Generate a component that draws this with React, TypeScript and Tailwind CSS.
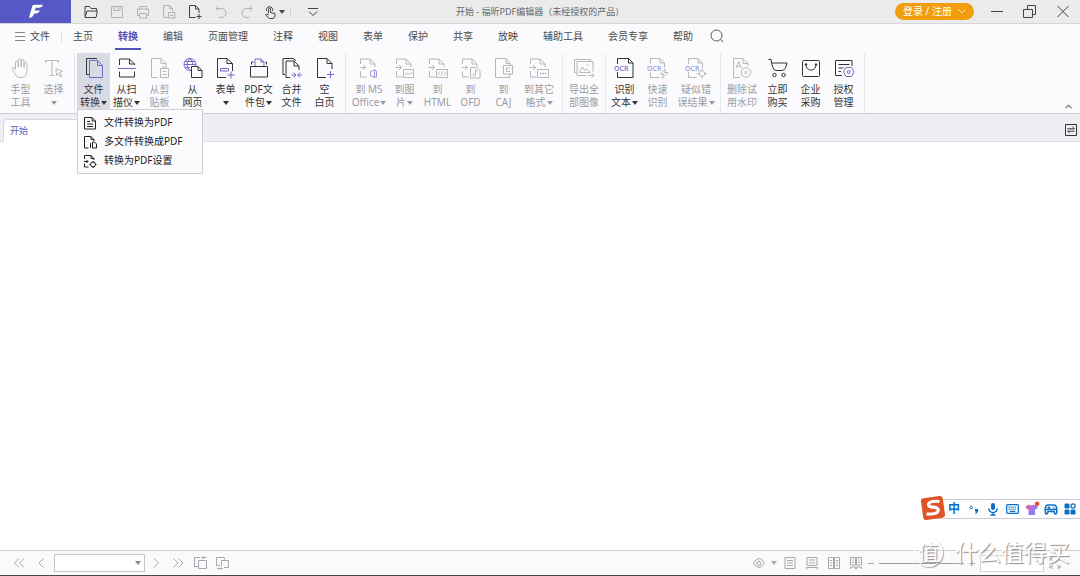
import type { ReactNode } from "react";

const ACCENT = "#6f6bc8";

/* ─── Icon helpers ─── */

function Svg({ size = 22, children }: { size?: number; children: ReactNode }) {
  return (
    <svg
      width={size}
      height={size}
      viewBox={`0 0 ${size} ${size}`}
      fill="none"
      stroke="currentColor"
      strokeWidth="1"
      strokeLinejoin="round"
      className="shrink-0"
      aria-hidden="true"
    >
      {children}
    </svg>
  );
}

function Caret() {
  return (
    <svg width="6" height="4" viewBox="0 0 6 4" className="ml-px inline-block shrink-0 align-middle" aria-hidden="true">
      <path d="M0 0h6L3 4z" fill="currentColor" />
    </svg>
  );
}

/* Page with an arrow going in, shared by all the "export to" tools */
function ExportPage({ children }: { children: ReactNode }) {
  return (
    <Svg>
      <path d="M2.500 7V2h9.500l5 5v3M12 2v5h5M2.500 14v6h6M1.500 10.500h6M5 8l2.500 2.500L5 13" />
      {children}
    </Svg>
  );
}

function OcrText() {
  return (
    <text x="0" y="13.500" fontSize="7" fontWeight="500" fill={ACCENT} stroke="none" fontFamily="Noto Sans, sans-serif">
      OCR
    </text>
  );
}

const ICONS: Record<string, ReactNode> = {
  hand: (
    <Svg>
      <path d="M5.500 12V5.500a1.400 1.400 0 0 1 2.800 0V10M8.300 10V3.500a1.400 1.400 0 0 1 2.900 0V10M11.200 10V4a1.400 1.400 0 0 1 2.900 0v6.500M14.100 10.500V7a1.400 1.400 0 0 1 2.900 0v7c0 4-2 6.500-6 6.500-3 0-4.500-1-6-3.500L2.500 12.500c-1-1.800 1-2.800 2-1.300l1 1.300" />
    </Svg>
  ),
  select: (
    <Svg>
      <path d="M2.500 6V3.500h13V6M9 3.500v15M6.500 18.500h5M13 11.500l6.500 3-3 1 2.500 3.500-1.500 1-2.500-3.500-1.500 2z" />
    </Svg>
  ),
  files: (
    <Svg>
      <path d="M6 17.500H3.500v-16H14" />
      <path d="M6.500 3.500h8l5 5v12h-13zM14.500 3.500v5h5" stroke={ACCENT} />
    </Svg>
  ),
  scanner: (
    <Svg>
      <path d="M3.500 8V2h10l5 5v1M13.500 2v5h5M3.500 14.500v5.500h15v-5.500" />
      <path d="M2 11.500h18" stroke={ACCENT} />
    </Svg>
  ),
  clipboard: (
    <Svg>
      <path d="M8.500 20.500h-6v-19H12l5 5V9M12 1.500v5h5" />
      <path d="M11.500 11.500h8v9h-8zM13.500 11.500v-1.500h4v1.500M13.500 14.500h4M13.500 17.500h4" />
    </Svg>
  ),
  web: (
    <Svg>
      <g stroke={ACCENT}>
        <circle cx="8" cy="7.500" r="6" />
        <path d="M2 7.500h12M8 1.500c-4 4-4 8 0 12M8 1.500c2 2 3 4 3 6M3 4.500h10M3 10.500h5" />
      </g>
      <path d="M9.500 9.500h6.500l4 4v7H9.500zM16 9.500v4h4" fill="#fbfbfd" />
    </Svg>
  ),
  form: (
    <Svg>
      <path d="M11 20.500H2.500v-19H12l5.500 5V14M12 1.500v5h5.500" />
      <path d="M5.500 11.500h8v2.500h-8zM12.500 18h7M16 14.500v7" stroke={ACCENT} />
    </Svg>
  ),
  package: (
    <Svg>
      <path d="M7 9V2h6l3 3v4M13 2v3h3" stroke={ACCENT} />
      <path d="M2.500 9.500h17v10.500h-17zM3.500 7.500V5h2M18.500 7.500V5h-1" />
    </Svg>
  ),
  merge: (
    <Svg>
      <path d="M4 17.500H2V1.500h10l3 2M9 20.500H5V4h8l5 5v4M13 4v5h5" />
      <path d="M10.500 18h4M12.500 15.500L15 18l-2.500 2.500M21 18h-4M19 15.500L16.500 18l2.500 2.500" stroke={ACCENT} />
    </Svg>
  ),
  blank: (
    <Svg>
      <path d="M12 20.500H3.500v-19h9.500l5 5V12M13 1.500v5h5" />
      <path d="M13 17.500h7M16.500 14v7" stroke={ACCENT} />
    </Svg>
  ),
  office: (
    <ExportPage>
      <path d="M12.500 14.500l4-1.500v7.500l-4-1.500zM16.500 13l2 1v6l-2 .500" stroke={ACCENT} />
    </ExportPage>
  ),
  image: (
    <ExportPage>
      <path d="M9.500 12.500h10v8h-10zM11 18.500l2.500-2.500 2 1.500 3-2" />
    </ExportPage>
  ),
  html: (
    <ExportPage>
      <path d="M9.500 12.500h11v8h-11zM12.800 14.500L11 16.500l1.800 1.800M17.200 14.500l1.800 2-1.800 1.800M15.500 14.300l-1 4.200" />
    </ExportPage>
  ),
  ofd: (
    <ExportPage>
      <path d="M10.500 10.500h6l3.500 3v7.500h-9.500zM15.500 12.500v5a1.200 1.200 0 1 1-1.500-1M15.500 12.500l2 1.500" fill="#fbfbfd" />
    </ExportPage>
  ),
  caj: (
    <Svg>
      <path d="M17 8V6.500l-4-5H2.500v19H16.500v-3.500M13 1.500v5h4" />
      <path d="M10.500 8.500h9v8.500h-9zM17 11h-3.500v3.500H17" />
    </Svg>
  ),
  other: (
    <ExportPage>
      <path d="M9.500 12.500h11v8h-11z" />
      <path d="M12 16.500h1.200M14.500 16.500h1.200M17 16.500h1.200" stroke={ACCENT} strokeWidth="1.400" />
    </ExportPage>
  ),
  pictures: (
    <Svg>
      <path d="M3.500 15.500h-2v-13h16v2M13 18.500H4v-14h16v10M6 15.500h11.500M6.500 15l3-5 2.500 3.500 1.500-2 3.500 3.500M14 8h1.500M15 18.500h6M18.500 16l2.500 2.500-2.500 2.500" />
    </Svg>
  ),
  ocr: (
    <Svg>
      <path d="M3.500 7V1.500h11l4.500 4.500v14.500H3.500V15M14.500 1.500V6H19" />
      <OcrText />
    </Svg>
  ),
  ocrFast: (
    <Svg>
      <path d="M3.500 7V1.500h9.500l4.500 4.500v5M13 1.500V6h4.500M3.500 15v5.500h9" />
      <OcrText />
      <path d="M18.500 12l-5 5h3l-1.500 4.500 6-6h-3.500z" fill="#fbfbfd" />
    </Svg>
  ),
  ocrSuspect: (
    <Svg>
      <path d="M3.500 7V1.500h9.500l4.500 4.500v5M13 1.500V6h4.500M3.500 15v5.500h8" />
      <OcrText />
      <circle cx="17" cy="16.500" r="2.800" />
      <path d="M17 12v2M17 19v2.500M12 16.500h2.500M19.500 16.500H22" />
    </Svg>
  ),
  watermark: (
    <Svg>
      <path d="M9 20.500H2.500v-19H12l5 5V9M12 1.500v5h5M5 11.500L7.700 4.500l2.800 7M6 9.500h3.500" />
      <circle cx="15" cy="15.500" r="4.800" />
      <path d="M13.200 13.700l3.600 3.600M16.800 13.700l-3.600 3.600" />
    </Svg>
  ),
  cart: (
    <Svg>
      <path d="M1.500 2.500H4q1.500 11 5 11h6q3.500 0 5-7.500H4.800" />
      <circle cx="7.500" cy="18" r="1.700" />
      <circle cx="16.500" cy="18" r="1.700" />
    </Svg>
  ),
  bag: (
    <Svg>
      <rect x="2.500" y="3.500" width="17" height="16" rx="1" />
      <path d="M6 7.500c0 7.500 10 7.500 10 0" />
      <circle cx="6" cy="7.500" r=".8" fill="currentColor" />
      <circle cx="16" cy="7.500" r=".8" fill="currentColor" />
    </Svg>
  ),
  license: (
    <Svg>
      <path d="M9 18.500H2.500v-15h16.500V9M5.500 7.500h11M5.500 11h5M5.500 14.500H8" />
      <path d="M10.500 15l2.500-4.500h5.500L21 15l-2.500 4.500H13z" stroke={ACCENT} />
      <circle cx="15.700" cy="15" r="1.500" stroke={ACCENT} />
    </Svg>
  ),
};

/* ─── Data ─── */

type Tool = {
  icon: string;
  lines: [string, string];
  caret?: boolean;
  off?: boolean;
  active?: boolean;
  width?: string;
};

const GROUPS: { pad: string; tools: Tool[] }[] = [
  {
    pad: "px-1",
    tools: [
      { icon: "hand", lines: ["手型", "工具"], off: true },
      { icon: "select", lines: ["选择", ""], caret: true, off: true },
    ],
  },
  {
    pad: "pl-0.5 pr-1",
    tools: [
      { icon: "files", lines: ["文件", "转换"], caret: true, active: true },
      { icon: "scanner", lines: ["从扫", "描仪"], caret: true },
      { icon: "clipboard", lines: ["从剪", "贴板"], off: true },
      { icon: "web", lines: ["从", "网页"] },
      { icon: "form", lines: ["表单", ""], caret: true },
      { icon: "package", lines: ["PDF文", "件包"], caret: true },
      { icon: "merge", lines: ["合并", "文件"] },
      { icon: "blank", lines: ["空", "白页"] },
    ],
  },
  {
    pad: "px-1",
    tools: [
      { icon: "office", lines: ["到 MS", "Office"], caret: true, off: true, width: "w-[38px]" },
      { icon: "image", lines: ["到图", "片"], caret: true, off: true },
      { icon: "html", lines: ["到", "HTML"], off: true },
      { icon: "ofd", lines: ["到", "OFD"], off: true },
      { icon: "caj", lines: ["到", "CAJ"], off: true },
      { icon: "other", lines: ["到其它", "格式"], caret: true, off: true, width: "w-[38px]" },
    ],
  },
  {
    pad: "px-0.5",
    tools: [{ icon: "pictures", lines: ["导出全", "部图像"], off: true, width: "w-[38px]" }],
  },
  {
    pad: "px-0.5",
    tools: [
      { icon: "ocr", lines: ["识别", "文本"], caret: true },
      { icon: "ocrFast", lines: ["快速", "识别"], off: true },
      { icon: "ocrSuspect", lines: ["疑似错", "误结果"], caret: true, off: true, width: "w-11" },
    ],
  },
  {
    pad: "pl-0.5 pr-1",
    tools: [
      { icon: "watermark", lines: ["删除试", "用水印"], off: true, width: "w-[38px]" },
      { icon: "cart", lines: ["立即", "购买"] },
      { icon: "bag", lines: ["企业", "采购"] },
      { icon: "license", lines: ["授权", "管理"] },
    ],
  },
];

const MENUS = ["主页", "转换", "编辑", "页面管理", "注释", "视图", "表单", "保护", "共享", "放映", "辅助工具", "会员专享", "帮助"];

const QUICK: { label: string; off?: boolean; icon: ReactNode }[] = [
  { label: "打开", icon: <path d="M2 12.500v-10h4.500L8 4.500h5.500V7M2 13.500L4 7h10.500L13 13.500z" /> },
  { label: "保存", off: true, icon: <path d="M2.500 2.500h11v11h-11zM5 2.500v4h6v-4M9 3.500v1.500" /> },
  { label: "打印", off: true, icon: <path d="M4.500 5V2.500h7V5M4.500 11.500h-2V5h11v6.500h-2M4.500 9.500h7v4.500h-7z" /> },
  { label: "另存", off: true, icon: <path d="M7 13.500H2.500v-12h6l3 3V7M8.500 1.500v3h3M7.500 8.500h6.500v5.500H7.500zM9 11.500h3.500" /> },
  { label: "新建", icon: <path d="M8.500 13.500h-6v-12h6l3.500 3.500V9M8.500 1.500V5H12M9.500 12.500h5M12 10v5" /> },
  { label: "撤销", off: true, icon: <path d="M5.500 2L3 4.500 5.500 7M3 4.500h5.500a4.500 4.500 0 0 1 0 9H6" /> },
  { label: "重做", off: true, icon: <path d="M10.500 2L13 4.500 10.500 7M13 4.500H7.500a4.500 4.500 0 0 0 0 9H10" /> },
];

/* ─── Title bar ─── */

function TitleBar() {
  return (
    <header className="flex h-6 items-stretch border-b border-[#d6d6d8] bg-[#ebebeb] text-[#444]">
      <div className="flex flex-1 items-stretch">
        <div className="mr-[7px] flex w-[71px] items-center justify-center bg-[#5659c5]">
          <svg width="16" height="16" viewBox="0 0 16 16" fill="#fff" aria-hidden="true">
            <path d="M4.500 1.500Q5.500.8 7 .8H15q-.8 2.800-3.500 3H7.600L6.800 6.600H12q-1.200 2.800-4 3H6.200Q5.200 13.500 1.200 14.200Q1.500 11 2.600 8z" />
          </svg>
        </div>
        {QUICK.map((q) => (
          <button
            key={q.label}
            aria-label={q.label}
            className={q.off ? "flex w-[26px] items-center justify-center text-[#b2b2b2]" : "flex w-[26px] items-center justify-center"}
          >
            <Svg size={16}>{q.icon}</Svg>
          </button>
        ))}
        <button aria-label="触摸模式" className="flex w-[26px] items-center justify-center">
          <Svg size={16}>
            <path d="M6.500 9.500V5a1 1 0 0 1 2 0v3.500l4.500 1V12l-1.500 2.500h-4L3.500 11l1-1 2 1M4.500 7a3.200 3.200 0 1 1 6 0" />
          </Svg>
          <Caret />
        </button>
        <span className="my-[7px] ml-1 w-px bg-[#d2d2d2]" />
        <button aria-label="自定义快速访问" className="ml-2.5 flex w-6 items-center justify-center">
          <Svg size={16}>
            <path d="M3 4.500h10M4 7.500l4 4 4-4" />
          </Svg>
        </button>
      </div>
      <h1 className="self-center whitespace-nowrap text-[9px] text-[#666]">开始 - 福昕PDF编辑器（未经授权的产品）</h1>
      <div className="flex flex-1 items-center justify-end">
        <button className="flex h-[17px] w-[79px] items-center justify-between rounded-full bg-[#f29d0d] px-2 text-[10px] whitespace-nowrap text-white">
          登录 / 注册
          <svg width="8" height="5" viewBox="0 0 8 5" fill="none" stroke="#fde3b5" aria-hidden="true">
            <path d="M.5.5L4 4 7.500.5" />
          </svg>
        </button>
        <button aria-label="最小化" className="ml-[15px] flex w-4 justify-center">
          <Svg size={14}>
            <path d="M1 6.500h12" />
          </Svg>
        </button>
        <button aria-label="还原" className="ml-[17px] flex w-4 justify-center">
          <Svg size={14}>
            <path d="M.5 4.500h9v8h-9zM4.500 4.500v-4h8v9h-3" />
          </Svg>
        </button>
        <button aria-label="关闭" className="mr-[9px] ml-[17px] flex w-4 justify-center">
          <Svg size={14}>
            <path d="M1.500 1l11 11M12.500 1l-11 11" />
          </Svg>
        </button>
      </div>
    </header>
  );
}

/* ─── Menu row ─── */

function MenuRow() {
  return (
    <nav className="flex h-[26px] items-stretch pl-[15px] text-[10px] whitespace-nowrap text-[#4a4a4a]">
      <button className="flex items-center gap-[5px] pb-0.5">
        <svg width="10" height="9" viewBox="0 0 10 9" stroke="#888" aria-hidden="true">
          <path d="M0 .5h10M0 4.500h10M0 8.500h10" />
        </svg>
        文件
      </button>
      <span className="mx-[11px] my-2 w-px bg-[#dcdce0]" />
      <div className="flex gap-[25px]">
        {MENUS.map((m) =>
          m === "转换" ? (
            <button key={m} className="relative pb-0.5 font-bold text-[#5452b6]">
              {m}
              <span className="absolute -inset-x-[3px] bottom-0 h-0.5 bg-[#5452b6]" />
            </button>
          ) : (
            <button key={m} className="pb-0.5">
              {m}
            </button>
          ),
        )}
      </div>
      <button aria-label="搜索" className="ml-[17px] pb-0.5 text-[#555]">
        <Svg size={14}>
          <circle cx="6.500" cy="6.500" r="5.500" />
          <path d="M10.500 10.500l2.500 2.500" />
        </Svg>
      </button>
    </nav>
  );
}

/* ─── Ribbon ─── */

function ToolButton({ tool }: { tool: Tool }) {
  const width = tool.width ?? "w-[33px]";
  const tone = tool.off ? "text-[#9c9ca0]" : "text-[#333]";
  const bg = tool.active ? "bg-[#d9dbe4]" : "";
  return (
    <button className={`${width} ${tone} ${bg} flex flex-col items-center pt-1`}>
      {tool.off ? <span className="opacity-70">{ICONS[tool.icon]}</span> : ICONS[tool.icon]}
      <span className="mt-1 block">{tool.lines[0]}</span>
      <span className="flex h-[13px] items-center justify-center">
        {tool.lines[1]}
        {tool.caret && <Caret />}
      </span>
    </button>
  );
}

function ConvertMenu() {
  return (
    <div
      role="menu"
      className="absolute top-[59px] left-[77px] z-10 flex w-[126px] flex-col border border-[#cfcfd6] bg-[#fbfbfd] py-[3px] text-[10px] text-[#222]"
    >
      <button role="menuitem" className="flex h-[19px] items-center gap-[7px] pl-[5px]">
        <Svg size={14}>
          <path d="M1.500 1.500h7.500l3.500 3.500v8h-11zM9 1.500V5h3.500M4 5.500h3M4 8h6M4 10.500h6" />
        </Svg>
        文件转换为PDF
      </button>
      <button role="menuitem" className="flex h-[19px] items-center gap-[7px] pl-[5px]">
        <Svg size={14}>
          <path d="M5.500 13h-4V1.500H8l3 3V6M8 1.500v3h3M7.500 13V8M9.500 7h2l2 2v4h-4z" />
        </Svg>
        多文件转换成PDF
      </button>
      <button role="menuitem" className="flex h-[19px] items-center gap-[7px] pl-[5px]">
        <Svg size={14}>
          <path d="M1.500 5V1.500H8l3 3V6M8 1.500v3h3M1.500 9.500v3.500h4M1 7.500h4M3.500 6l1.500 1.500L3.500 9" />
          <circle cx="10" cy="10.500" r="2.500" />
          <path d="M10 7v1.500M10 12.500V14M6.500 10.500H8M12 10.500h1.500" />
        </Svg>
        转换为PDF设置
      </button>
    </div>
  );
}

function Ribbon() {
  return (
    <section className="relative flex h-16 border-b border-[#cdcfd6] pt-[3px] text-[10px] leading-[13px] whitespace-nowrap">
      {GROUPS.map((g, i) => (
        <div key={i} className={`${g.pad} flex border-r border-[#e8e8ec]`}>
          {g.tools.map((t) => (
            <ToolButton key={t.icon} tool={t} />
          ))}
        </div>
      ))}
      <button aria-label="折叠功能区" className="mr-2 mb-1 ml-auto self-end text-[#888]">
        <svg width="7" height="5" viewBox="0 0 7 5" fill="none" stroke="currentColor" strokeWidth="1.400" aria-hidden="true">
          <path d="M.5 4.300l3-3 3 3" />
        </svg>
      </button>
      <ConvertMenu />
    </section>
  );
}

function TabStrip() {
  return (
    <div className="flex h-7 items-end justify-between border-b border-[#dcdde2] bg-[#eeeff3] pl-[3px]">
      <button className="-mb-px h-[23px] w-[120px] rounded-tl border-t border-l border-[#d8d9df] bg-white pl-1.5 text-left text-[9px] text-[#5f5cb8]">
        开始
      </button>
      <button aria-label="切换标签" className="mr-[3px] self-center pt-1 text-[#333]">
        <Svg size={12}>
          <path d="M.5.5h11v11H.5zM2.500 4.800h7L7.500 3M9.500 7.200h-7L4.500 9" />
        </Svg>
      </button>
    </div>
  );
}

/* ─── Status bar ─── */

function StatusBar() {
  return (
    <footer className="flex h-[26px] items-center border-t border-b border-t-[#cfcfd2] border-b-[#4a4a4e] bg-[#fafafc] pr-[18px] pl-3 text-[#a8a8ac]">
      <button aria-label="第一页">
        <Svg size={14}>
          <path d="M7 2.500L2.500 7 7 11.500M12 2.500L7.500 7l4.500 4.500" />
        </Svg>
      </button>
      <button aria-label="上一页" className="ml-2">
        <Svg size={14}>
          <path d="M9.500 2.500L5 7l4.500 4.500" />
        </Svg>
      </button>
      <div className="relative ml-1.5 flex items-center">
        <select aria-label="页码" className="h-[18px] w-[91px] appearance-none border border-[#c6c6ca] bg-white text-[10px]">
          <option></option>
        </select>
        <span className="pointer-events-none absolute right-1 flex text-[#888]">
          <Caret />
        </span>
      </div>
      <button aria-label="下一页" className="ml-1">
        <Svg size={14}>
          <path d="M5 2.500L9.500 7 5 11.500" />
        </Svg>
      </button>
      <button aria-label="最后一页" className="ml-2">
        <Svg size={14}>
          <path d="M2.500 2.500L7 7l-4.500 4.500M7.500 2.500L12 7l-4.500 4.500" />
        </Svg>
      </button>
      <button aria-label="后退" className="ml-2">
        <Svg size={16}>
          <path d="M5 11.500H1.500v-9H7M5.500 5.500h8v8h-8zM13.500 2.500H9M10.500 1L9 2.500 10.500 4" />
        </Svg>
      </button>
      <button aria-label="前进" className="ml-1.5">
        <Svg size={16}>
          <path d="M5 10.500H1.500v-8h8v2M6.500 11V5.500h7v7H9M2 13.500h5M5.500 12L7 13.500 5.500 15" />
        </Svg>
      </button>

      <div className="ml-auto flex items-center">
        <button aria-label="护眼模式" className="flex items-center gap-1">
          <Svg size={14}>
            <path d="M1.500 7q5.500-9 11 0q-5.500 9-11 0z" />
            <circle cx="7" cy="7.500" r="2" />
            <path d="M7 4.500q-1 1.500-2 2.500" />
          </Svg>
          <Caret />
        </button>
        <button aria-label="单页" className="ml-1.5">
          <Svg size={14}>
            <path d="M2 1.500h10v11H2zM4 4.500h6M4 7h6M4 9.500h6" />
          </Svg>
        </button>
        <button aria-label="连续" className="ml-2">
          <Svg size={14}>
            <path d="M2 1.500h10v8H2zM4 4h6M4 7h6M1 11.500h12M2 13.500v-2h10v2" />
          </Svg>
        </button>
        <button aria-label="双页" className="ml-2">
          <Svg size={14}>
            <path d="M1.500 1.500h5v11h-5zM7.500 1.500h5v11h-5zM3 4.500h2M3 7h2M3 9.500h2M9 4.500h2M9 7h2M9 9.500h2" />
          </Svg>
        </button>
        <button aria-label="双页连续" className="ml-2">
          <Svg size={14}>
            <path d="M1.500 1.500h5v7.500h-5zM7.500 1.500h5v7.500h-5zM3 4h2M3 6.500h2M9 4h2M9 6.500h2M1.500 13v-2h5v2M7.500 13v-2h5v2" />
          </Svg>
        </button>
        <button aria-label="缩小" className="ml-1">
          <Svg size={8}>
            <path d="M1 4.500h6" />
          </Svg>
        </button>
        <input
          type="range"
          aria-label="缩放"
          className="mx-1 h-px w-[85px] appearance-none bg-[#a0a0a4] [&::-webkit-slider-thumb]:size-0 [&::-webkit-slider-thumb]:appearance-none"
        />
        <button aria-label="放大">
          <Svg size={8}>
            <path d="M1 4.500h6M4 1.500v6" />
          </Svg>
        </button>
        <input type="text" aria-label="缩放比例" className="ml-1 h-[17px] w-16 border border-[#d4d4d8] bg-white text-[10px]" />
        <button aria-label="全屏" className="ml-1">
          <Svg size={14}>
            <path d="M2 5V2h3M9 2h3v3M12 9v3H9M5 12H2V9M2 2l3 3M12 2L9 5M12 12L9 9M2 12l3-3" />
          </Svg>
        </button>
      </div>
    </footer>
  );
}

/* ─── Floating overlays ─── */

function ImeBar() {
  return (
    <div className="absolute right-0 bottom-[57px] z-20 flex h-5 items-center border border-r-0 border-[#c8cad8] bg-white pr-1 pl-5 text-[#0b6fc4]">
      <svg width="27" height="27" viewBox="0 0 27 27" className="absolute -top-[5px] -left-2" aria-hidden="true">
        <rect x="2" y="2" width="22" height="22" rx="3" fill="#de5426" transform="rotate(-8 13 13)" />
        <path d="M19.500 6.500Q9 5.500 8.500 9.500Q8.500 12 13 12.200Q18.500 12.700 18.300 15.500Q17.500 19.500 6.500 19" fill="none" stroke="#fff" strokeWidth="3.200" />
      </svg>
      <span className="mr-2 text-[12px] leading-[18px] font-bold">中</span>
      <svg width="12" height="14" viewBox="0 0 12 14" className="mr-[7px]" fill="currentColor" aria-hidden="true">
        <circle cx="3.200" cy="5.500" r="1.300" fill="none" stroke="currentColor" />
        <path d="M7 7h3q.8 3-2.200 5l-.8-.8q1.300-.8 1.200-1.700H7z" />
      </svg>
      <svg width="12" height="14" viewBox="0 0 12 14" className="mr-[7px]" fill="none" stroke="currentColor" strokeWidth="1.500" aria-hidden="true">
        <rect x="4" y="1" width="4" height="7" rx="2" fill="currentColor" stroke="none" />
        <path d="M1.800 6.500q.5 4 4.200 4t4.200-4M6 10.500V13M3.500 13h5" />
      </svg>
      <svg width="13" height="12" viewBox="0 0 13 12" className="mr-1.5" fill="none" stroke="currentColor" strokeWidth="1.300" aria-hidden="true">
        <rect x=".7" y="1.700" width="11.600" height="8.600" rx="1" />
        <path d="M2.500 4.200h8M2.500 6.200h8" strokeDasharray="1.200 .8" />
        <path d="M3.800 8.400h5.500" />
      </svg>
      <svg width="15" height="16" viewBox="0 0 15 16" className="mr-1" aria-hidden="true">
        <defs>
          <linearGradient id="shirt" x1="0" y1="0" x2="1" y2="1">
            <stop offset="0" stopColor="#f05a7a" />
            <stop offset=".5" stopColor="#a874ea" />
            <stop offset="1" stopColor="#5b8df5" />
          </linearGradient>
        </defs>
        <path d="M.5 5.500L4 3.500q2.500 2 5 0l4 2-1.500 3-1.500-.5v6H3.500V8L2 8.500z" fill="url(#shirt)" />
        <circle cx="12.200" cy="2.700" r="2.300" fill="#e34a33" />
      </svg>
      <svg width="14" height="13" viewBox="0 0 14 13" className="mr-1.5" fill="none" stroke="currentColor" strokeWidth="1.600" aria-hidden="true">
        <path d="M4 2h6q2.500 0 2.800 4.500H1.200Q1.500 2 4 2zM1.200 6.500Q1 10.500 2 11q1.500 0 2-2.500h6q.5 2.500 2 2.500 1-.5.8-4.500" />
        <path d="M3.500 4.800h3M5 3.300v3M8.800 4.300h1M10 5.800h1" strokeWidth="1.200" />
      </svg>
      <svg width="12" height="12" viewBox="0 0 12 12" fill="currentColor" aria-hidden="true">
        <rect x=".5" y=".5" width="5" height="5" rx="1.200" />
        <circle cx="9" cy="3" r="2.100" fill="none" stroke="currentColor" strokeWidth="1.300" />
        <rect x=".5" y="6.500" width="5" height="5" rx="1.200" />
        <rect x="6.500" y="6.500" width="5" height="5" rx="1.200" />
      </svg>
    </div>
  );
}

function Watermark() {
  return (
    <div className="pointer-events-none absolute right-2.5 bottom-2 z-20 flex items-center gap-3 text-white [text-shadow:1px_1px_1px_#8c8c90]">
      <span className="flex size-[29px] items-center justify-center rounded-full border border-white text-[21px] leading-none shadow-[1px_1px_1px_#a8a8ac]">
        值
      </span>
      <span className="text-[23px] leading-8">什么值得买</span>
    </div>
  );
}

/* ─── Page ─── */

export default function App() {
  return (
    <div className="relative flex min-h-screen flex-col overflow-hidden bg-[#fbfbfd] font-['Noto_Sans','Noto_Sans_CJK_SC',sans-serif]">
      <TitleBar />
      <MenuRow />
      <Ribbon />
      <TabStrip />
      <main className="flex-1 bg-white" />
      <StatusBar />
      <ImeBar />
      <Watermark />
    </div>
  );
}
